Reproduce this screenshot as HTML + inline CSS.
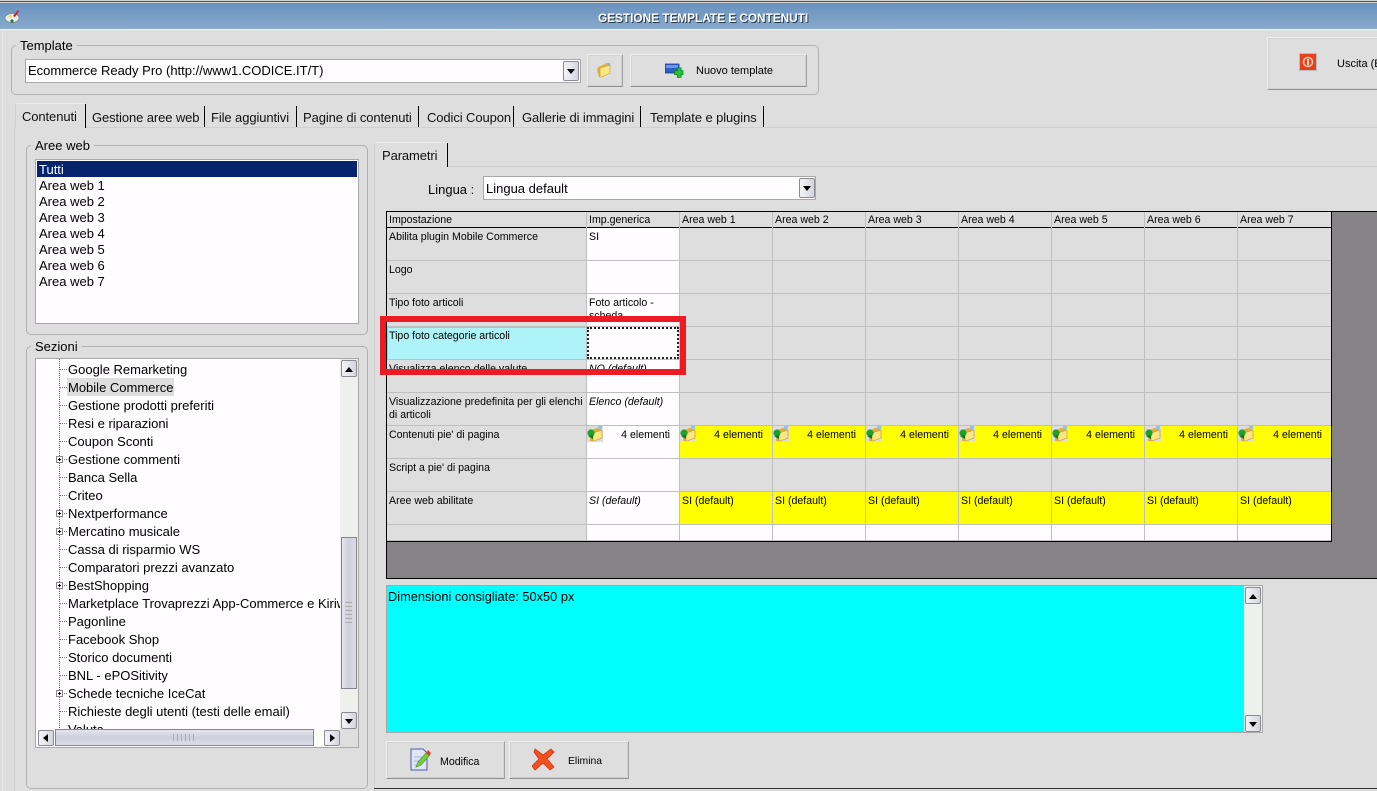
<!DOCTYPE html>
<html><head><meta charset="utf-8"><style>
html,body{margin:0;padding:0}
body{width:1377px;height:791px;position:relative;overflow:hidden;background:#dedede;font:13px/16px "Liberation Sans",sans-serif;color:#000}
.a,.t{position:absolute}
.t{white-space:nowrap}
.grp{position:absolute;border:1px solid #b0b0b0;border-radius:5px;box-sizing:border-box}
.lg{position:absolute;background:#dedede;padding:0 4px;white-space:nowrap;line-height:16px;height:16px}
.btn{position:absolute;box-sizing:border-box;background:#dedede;border:1px solid;border-color:#f0f0f0 #a0a0a0 #8f8f8f #f0f0f0;box-shadow:inset 0 0 0 1px #d2d2d2}
.combo{position:absolute;box-sizing:border-box;background:#fffdff;border:1px solid #a8a8a8;line-height:22px;padding-left:2px}
.ar{position:absolute;box-sizing:border-box;background:linear-gradient(90deg,#f4f4f8,#d5d5e0);border:1px solid #8a8a90;border-radius:2px}
.ar:after{content:"";position:absolute;left:50%;top:50%;margin:-2px 0 0 -4px;border:4px solid transparent;border-top:5px solid #000;border-bottom:0}
.ar.up:after{border-top:0;border-bottom:5px solid #000}
.ar.lf:after{margin:-4px 0 0 -3px;border:4px solid transparent;border-right:5px solid #000;border-left:0}
.ar.rt:after{margin:-4px 0 0 -2px;border:4px solid transparent;border-left:5px solid #000;border-right:0}
.sep{position:absolute;width:1px;background:#000;top:106px;height:21px}
.tab{position:absolute;top:110px;line-height:16px;white-space:nowrap;color:#111;letter-spacing:-.1px}
.gr{position:absolute;left:387px;top:212px;display:grid;grid-template-columns:199px 92px 92px 92px 92px 92px 92px 92px 93px;grid-template-rows:15px 32px 32px 32px 32px 32px 32px 32px 32px 32px 15px;column-gap:1px;row-gap:1px;background:#bfbfbf;font:10.6px/13px "Liberation Sans",sans-serif}
.gr div{background:#dedede;overflow:hidden;padding:3px 0 0 2px;box-sizing:border-box;position:relative}
.gr .h{padding:2px 0 0 2px;line-height:13px;height:16px;margin-bottom:-1px;z-index:1;background:#dedede;border-bottom:1px solid #000}
.gr .w{background:#fffdff}
.gr .y{background:#ff0}
.gr i{font-style:italic}
.gr svg{position:absolute;left:0;top:0}
.gr .n{position:absolute;right:9px;top:3px}
.tr{position:absolute;left:68px;line-height:18px;height:18px;white-space:nowrap;margin-top:1px}
.d{position:absolute;left:60px;width:7px;border-top:1px dotted #777}
.pl{position:absolute;left:56px;width:7px;height:7px;box-sizing:border-box;border:1px solid #888;background:#fff}
.pl:after{content:"";position:absolute;left:1px;top:2px;width:3px;height:1px;background:#000}
.pl:before{content:"";position:absolute;left:2px;top:1px;width:1px;height:3px;background:#000}
</style></head><body>
<svg width="0" height="0" style="position:absolute"><defs>
<symbol id="fo" viewBox="0 0 16 16"><path d="M2 5L9 2l1-1h3l1 1v9L6 15H3L1 8z" fill="#e0b040"/><path d="M4 6l10-3v8l-8 4H4z" fill="#ffe680" stroke="#c89a30" stroke-width=".6"/><path d="M11 1h3v3h-3z" fill="#8ab0e0"/></symbol>
<symbol id="fg" viewBox="0 0 16 16"><rect width="16" height="16" fill="#dedede"/><path d="M3 5L9 2h5v10L6 15H3z" fill="#e0b040"/><path d="M6 7l9-3v8l-8 3H6z" fill="#ffe680" stroke="#c09030" stroke-width=".6"/><path d="M11 0h4v3h-4z" fill="#9ac0e0"/><circle cx="4" cy="7" r="3.6" fill="#1fa02c"/><path d="M1 10l5-1 0 4z" fill="#0f7a1c"/></symbol>
</defs></svg>

<!-- top + title -->
<div class="a" style="left:0;top:0;width:1377px;height:3px;background:#cfcfcf"></div>
<div class="a" style="left:0;top:1px;width:1377px;height:1px;background:#55585c"></div>
<div class="a" style="left:0;top:3px;width:1377px;height:26px;background:linear-gradient(#6892bf,#88a9cd)"></div>
<div class="a" style="left:0;top:29px;width:1377px;height:1px;background:#f2f5f8"></div>
<div class="t" style="left:598px;top:10px;font:bold 11.8px/16px 'Liberation Sans',sans-serif;color:#fff;text-shadow:1px 1px 0 #2a3a4a">GESTIONE TEMPLATE E CONTENUTI</div>
<svg class="a" style="left:4px;top:8px" width="16" height="16" viewBox="0 0 16 16"><ellipse cx="8" cy="10" rx="7" ry="4.5" fill="#e8eef4" stroke="#777" stroke-width=".6"/><path d="M9 8l5-6 1 1-4 6z" fill="#d02020"/><circle cx="6" cy="8" r="1.4" fill="#f0e020"/><circle cx="8" cy="13" r="1.6" fill="#208030"/></svg>
<div class="a" style="left:2px;top:30px;width:1px;height:761px;background:#e8e8e8"></div>

<!-- Template group -->
<div class="grp" style="left:11px;top:45px;width:808px;height:50px"></div>
<div class="lg" style="left:16px;top:38px">Template</div>
<div class="combo" style="left:25px;top:59px;width:556px;height:24px;padding-left:2px">Ecommerce Ready Pro (http://www1.CODICE.IT/T)</div>
<div class="ar" style="left:563px;top:61px;width:16px;height:20px"></div>
<div class="btn" style="left:587px;top:54px;width:36px;height:33px"><svg class="a" style="left:8px;top:7px" width="16" height="16"><use href="#fo"/></svg></div>
<div class="btn" style="left:630px;top:54px;width:177px;height:33px">
<svg class="a" style="left:34px;top:8px" width="20" height="16" viewBox="0 0 20 16"><rect x="0" y="1" width="14" height="9" fill="#2a5fc8" stroke="#1a3f90" stroke-width=".8"/><rect x="1" y="2" width="12" height="3" fill="#6a98e8"/><path d="M11 6h3V3h4v3h-0v0h2v4h-2v3h-4v-3h-3z" fill="#28c038" stroke="#0c7a18" stroke-width=".8" transform="translate(-1,2) scale(.95)"/></svg>
<div class="t" style="left:65px;top:8px;font-size:11px">Nuovo template</div></div>
<div class="btn" style="left:1267px;top:37px;width:120px;height:53px">
<svg class="a" style="left:31px;top:15px" width="18" height="18" viewBox="0 0 18 18"><rect x=".5" y=".5" width="17" height="17" fill="#e8401a" stroke="#bbb"/><circle cx="9" cy="9" r="4.5" fill="none" stroke="#f8c8b0" stroke-width="1.6"/><rect x="8" y="6" width="2" height="6" fill="#f8e0d0"/></svg>
<div class="t" style="left:69px;top:18px;font-size:11px">Uscita (ESC)</div></div>

<!-- main tabs -->
<div class="a" style="left:14px;top:127px;width:1363px;height:1px;background:#d0d0d0"></div>
<div class="a" style="left:14px;top:127px;width:1px;height:664px;background:#d0d0d0"></div>
<div class="a" style="left:15px;top:103px;width:70px;height:25px;background:#dedede;border-top:1px solid #ececec;border-left:1px solid #d0d0d0;border-radius:3px 0 0 0;box-sizing:border-box"></div>
<div class="t" style="left:22px;top:109px;color:#111;letter-spacing:-.1px">Contenuti</div>
<div class="sep" style="left:85px;top:104px;height:24px"></div>
<div class="tab" style="left:92px">Gestione aree web</div><div class="sep" style="left:204px"></div>
<div class="tab" style="left:211px">File aggiuntivi</div><div class="sep" style="left:296px"></div>
<div class="tab" style="left:303px">Pagine di contenuti</div><div class="sep" style="left:418px"></div>
<div class="tab" style="left:427px">Codici Coupon</div><div class="sep" style="left:513px"></div>
<div class="tab" style="left:522px">Gallerie di immagini</div><div class="sep" style="left:640px"></div>
<div class="tab" style="left:650px">Template e plugins</div><div class="sep" style="left:763px"></div>

<!-- Aree web -->
<div class="grp" style="left:26px;top:145px;width:342px;height:190px"></div>
<div class="lg" style="left:31px;top:138px">Aree web</div>
<div class="a" style="left:35px;top:159px;width:324px;height:165px;box-sizing:border-box;border:1px solid #a8a8a8;background:#fffdff"></div>
<div class="a" style="left:37px;top:161px;width:320px;height:16px;background:#06246b"></div>
<div class="t" style="left:39px;top:162px;color:#fff">Tutti</div>
<div class="t" style="left:39px;top:178px">Area web 1</div>
<div class="t" style="left:39px;top:194px">Area web 2</div>
<div class="t" style="left:39px;top:210px">Area web 3</div>
<div class="t" style="left:39px;top:226px">Area web 4</div>
<div class="t" style="left:39px;top:242px">Area web 5</div>
<div class="t" style="left:39px;top:258px">Area web 6</div>
<div class="t" style="left:39px;top:274px">Area web 7</div>

<!-- Sezioni -->
<div class="grp" style="left:26px;top:346px;width:342px;height:443px"></div>
<div class="lg" style="left:31px;top:339px">Sezioni</div>
<div class="a" style="left:35px;top:358px;width:324px;height:390px;box-sizing:border-box;border:1px solid #a8a8a8;background:#fffdff;overflow:hidden"></div>
<div class="a" style="left:36px;top:359px;width:304px;height:370px;overflow:hidden">
<div style="position:absolute;left:-36px;top:-359px;width:400px;height:800px">
<div class="a" style="left:59px;top:359px;width:0;height:371px;border-left:1px dotted #666"></div>
<div class="a" style="left:67px;top:378px;width:107px;height:18px;background:#dedede"></div>
<div class="d" style="top:369px"></div><div class="tr" style="top:360px">Google Remarketing</div>
<div class="d" style="top:387px"></div><div class="tr" style="top:378px">Mobile Commerce</div>
<div class="d" style="top:405px"></div><div class="tr" style="top:396px">Gestione prodotti preferiti</div>
<div class="d" style="top:423px"></div><div class="tr" style="top:414px">Resi e riparazioni</div>
<div class="d" style="top:441px"></div><div class="tr" style="top:432px">Coupon Sconti</div>
<div class="d" style="top:459px"></div><div class="pl" style="top:456px"></div><div class="tr" style="top:450px">Gestione commenti</div>
<div class="d" style="top:477px"></div><div class="tr" style="top:468px">Banca Sella</div>
<div class="d" style="top:495px"></div><div class="tr" style="top:486px">Criteo</div>
<div class="d" style="top:513px"></div><div class="pl" style="top:510px"></div><div class="tr" style="top:504px">Nextperformance</div>
<div class="d" style="top:531px"></div><div class="pl" style="top:528px"></div><div class="tr" style="top:522px">Mercatino musicale</div>
<div class="d" style="top:549px"></div><div class="tr" style="top:540px">Cassa di risparmio WS</div>
<div class="d" style="top:567px"></div><div class="tr" style="top:558px">Comparatori prezzi avanzato</div>
<div class="d" style="top:585px"></div><div class="pl" style="top:582px"></div><div class="tr" style="top:576px">BestShopping</div>
<div class="d" style="top:603px"></div><div class="tr" style="top:594px">Marketplace Trovaprezzi App-Commerce e Kiriway</div>
<div class="d" style="top:621px"></div><div class="tr" style="top:612px">Pagonline</div>
<div class="d" style="top:639px"></div><div class="tr" style="top:630px">Facebook Shop</div>
<div class="d" style="top:657px"></div><div class="tr" style="top:648px">Storico documenti</div>
<div class="d" style="top:675px"></div><div class="tr" style="top:666px">BNL - ePOSitivity</div>
<div class="d" style="top:693px"></div><div class="pl" style="top:690px"></div><div class="tr" style="top:684px">Schede tecniche IceCat</div>
<div class="d" style="top:711px"></div><div class="tr" style="top:702px">Richieste degli utenti (testi delle email)</div>
<div class="d" style="top:729px"></div><div class="tr" style="top:720px">Valuta</div>
</div></div>
<!-- tree scrollbars -->
<div class="a" style="left:340px;top:359px;width:18px;height:370px;background:#eef0ee"></div>
<div class="ar up" style="left:341px;top:360px;width:16px;height:17px"></div>
<div class="a" style="left:341px;top:537px;width:16px;height:152px;box-sizing:border-box;border:1px solid #85858c;background:linear-gradient(90deg,#e4e4ee,#cfcfdc 50%,#dcdce6)"></div>
<div class="a" style="left:345px;top:602px;width:7px;height:22px;background:repeating-linear-gradient(#aaa 0 1px,transparent 1px 4px)"></div>
<div class="ar" style="left:341px;top:712px;width:16px;height:17px"></div>
<div class="a" style="left:340px;top:729px;width:18px;height:18px;background:#dedede"></div>
<div class="ar lf" style="left:38px;top:730px;width:16px;height:16px"></div>
<div class="a" style="left:55px;top:729px;width:259px;height:17px;box-sizing:border-box;border:1px solid #85858c;background:linear-gradient(#e4e4ee,#cfcfdc 50%,#dcdce6)"></div>
<div class="a" style="left:173px;top:734px;width:22px;height:7px;background:repeating-linear-gradient(90deg,#aaa 0 1px,transparent 1px 4px)"></div>
<div class="a" style="left:314px;top:730px;width:9px;height:16px;background:#fdfdf8"></div>
<div class="ar rt" style="left:324px;top:730px;width:16px;height:16px"></div>

<!-- Parametri -->
<div class="a" style="left:374px;top:166px;width:1003px;height:1px;background:#d0d0d0"></div>
<div class="a" style="left:374px;top:143px;width:1px;height:648px;background:#d0d0d0"></div>
<div class="a" style="left:375px;top:142px;width:73px;height:25px;background:#dedede;border-top:1px solid #ececec"></div>
<div class="t" style="left:382px;top:148px;color:#111;letter-spacing:-.1px">Parametri</div>
<div class="a" style="left:447px;top:143px;width:1px;height:24px;background:#000"></div>
<div class="t" style="left:428px;top:182px">Lingua :</div>
<div class="combo" style="left:483px;top:176px;width:333px;height:24px;line-height:23px">Lingua default</div>
<div class="ar" style="left:799px;top:178px;width:16px;height:20px"></div>

<!-- grid area -->
<div class="a" style="left:386px;top:211px;width:991px;height:368px;box-sizing:border-box;background:#858385;border:solid #000;border-width:1px 0 1px 1px"></div>
<div class="a" style="left:386px;top:211px;width:946px;height:331px;box-sizing:border-box;border:1px solid #000;background:#bfbfbf;border-width:1px 1px 1px 1px"></div>
<div class="gr">
<div class="h">Impostazione</div><div class="h">Imp.generica</div><div class="h">Area web 1</div><div class="h">Area web 2</div><div class="h">Area web 3</div><div class="h">Area web 4</div><div class="h">Area web 5</div><div class="h">Area web 6</div><div class="h">Area web 7</div>

<div>Abilita plugin Mobile Commerce</div><div class="w">SI</div><div></div><div></div><div></div><div></div><div></div><div></div><div></div>
<div>Logo</div><div class="w"></div><div></div><div></div><div></div><div></div><div></div><div></div><div></div>
<div>Tipo foto articoli</div><div class="w">Foto articolo - scheda</div><div></div><div></div><div></div><div></div><div></div><div></div><div></div>
<div style="background:#aef3f8;margin:1px 0 0 1px;padding:2px 0 0 1px">Tipo foto categorie articoli</div><div class="w" style="outline:2px dotted #222;outline-offset:-2px"></div><div></div><div></div><div></div><div></div><div></div><div></div><div></div>
<div>Visualizza elenco delle valute</div><div class="w"><i>NO (default)</i></div><div></div><div></div><div></div><div></div><div></div><div></div><div></div>
<div>Visualizzazione predefinita per gli elenchi di articoli</div><div class="w"><i>Elenco (default)</i></div><div></div><div></div><div></div><div></div><div></div><div></div><div></div>
<div>Contenuti pie' di pagina</div>
<div class="w"><svg width="16" height="16"><use href="#fg"/></svg><span class="n">4 elementi</span></div>
<div class="y"><svg width="16" height="16"><use href="#fg"/></svg><span class="n">4 elementi</span></div>
<div class="y"><svg width="16" height="16"><use href="#fg"/></svg><span class="n">4 elementi</span></div>
<div class="y"><svg width="16" height="16"><use href="#fg"/></svg><span class="n">4 elementi</span></div>
<div class="y"><svg width="16" height="16"><use href="#fg"/></svg><span class="n">4 elementi</span></div>
<div class="y"><svg width="16" height="16"><use href="#fg"/></svg><span class="n">4 elementi</span></div>
<div class="y"><svg width="16" height="16"><use href="#fg"/></svg><span class="n">4 elementi</span></div>
<div class="y"><svg width="16" height="16"><use href="#fg"/></svg><span class="n">4 elementi</span></div>
<div>Script a pie' di pagina</div><div class="w"></div><div></div><div></div><div></div><div></div><div></div><div></div><div></div>
<div>Aree web abilitate</div><div class="w"><i>SI (default)</i></div><div class="y">SI (default)</div><div class="y">SI (default)</div><div class="y">SI (default)</div><div class="y">SI (default)</div><div class="y">SI (default)</div><div class="y">SI (default)</div><div class="y">SI (default)</div>
<div></div><div class="w"></div><div class="w"></div><div class="w"></div><div class="w"></div><div class="w"></div><div class="w"></div><div class="w"></div><div class="w"></div>
</div>

<!-- red highlight -->
<div class="a" style="left:380px;top:316px;width:306px;height:59px;box-sizing:border-box;border:6px solid #ed1c24"></div>

<!-- memo -->
<div class="a" style="left:386px;top:585px;width:877px;height:148px;box-sizing:border-box;border:1px solid #a8a8a8;background:#0ff;font-size:12.8px;line-height:14px;padding:4px 0 0 1px">Dimensioni consigliate: 50x50 px</div>
<div class="a" style="left:1244px;top:586px;width:18px;height:146px;background:#eef0ee"></div>
<div class="ar up" style="left:1245px;top:587px;width:16px;height:17px"></div>
<div class="ar" style="left:1245px;top:715px;width:16px;height:17px"></div>

<!-- bottom buttons -->
<div class="btn" style="left:386px;top:741px;width:119px;height:38px">
<svg class="a" style="left:23px;top:6px" width="21" height="24" viewBox="0 0 21 24"><path d="M1 1h12l4 4v17H1z" fill="#dfe6f6" stroke="#4a5aa0"/><path d="M4 9h9M4 13h7M4 17h6" stroke="#a8b4d8"/><path d="M6 19l2-5 9-10 3 3-9 10z" fill="#70d040" stroke="#4a9a28" stroke-width=".7"/><path d="M16 5l2-3 3 3-2 3z" fill="#e04030"/></svg>
<div class="t" style="left:53px;top:12px;font-size:10.6px">Modifica</div></div>
<div class="btn" style="left:509px;top:741px;width:120px;height:38px">
<svg class="a" style="left:22px;top:6px" width="23" height="23" viewBox="0 0 23 23"><path d="M3 1l8 6 8-6 3 3-7 7 7 8-4 3-7-7-8 7-3-4 7-7L2 4z" fill="#f4501e" stroke="#d83010" stroke-width=".8"/></svg>
<div class="t" style="left:58px;top:12px;font-size:10.4px">Elimina</div></div>
<div class="a" style="left:374px;top:788px;width:1003px;height:1px;background:#333"></div>
</body></html>
